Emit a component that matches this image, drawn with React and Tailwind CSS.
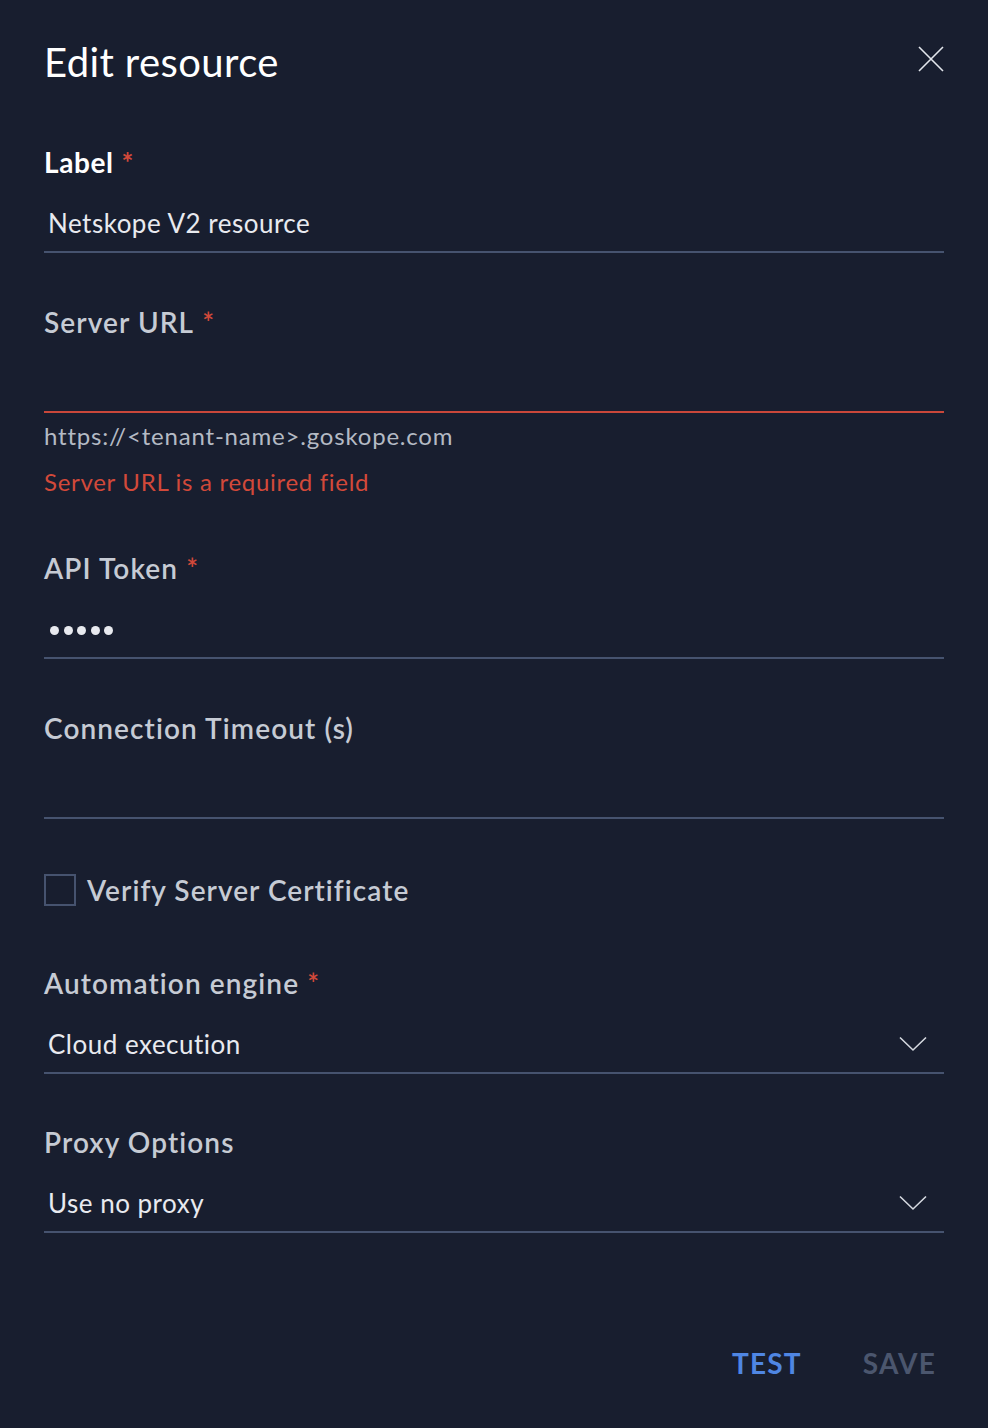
import React from 'react';

const font = { fontFamily: 'Lato, "Open Sans", sans-serif' };

function Req() {
  return <span className="ml-[8px] text-[#d2493a]">*</span>;
}

function Chevron() {
  return (
    <svg className="w-[28px] h-[16px]" viewBox="0 0 28 16" fill="none">
      <path d="M1 1.5 L14 14 L27 1.5" stroke="#d5d9e0" strokeWidth="1.6" />
    </svg>
  );
}

function Field({ label, required, value, dots, error, select, bold }) {
  return (
    <div className="flex flex-col">
      <div
        className={`text-[28px] leading-[32px] ${
          bold ? 'font-bold text-white tracking-[0.6px]' : 'font-semibold text-[#c6cbd4] tracking-[1.1px]'
        }`}
      >
        {label}
        {required && <Req />}
      </div>
      <div
        className={`h-[75px] flex items-end justify-between pl-[4px] pb-[12px] border-b-2 ${
          error ? 'border-[#c9473a]' : 'border-[#46536f]'
        }`}
      >
        {dots ? (
          <div className="flex gap-[4.5px] mb-[10px] pl-[2px]">
            {[0, 1, 2, 3, 4].map((i) => (
              <span key={i} className="w-[9px] h-[9px] rounded-full bg-[#e8eaef]" />
            ))}
          </div>
        ) : (
          <span className="text-[26px] leading-[32px] text-[#e8eaef] tracking-[0.5px]">{value}</span>
        )}
        {select && (
          <span className="mr-[17px] mb-[8px]">
            <Chevron />
          </span>
        )}
      </div>
    </div>
  );
}

export default function App() {
  return (
    <div className="min-h-[1428px] w-[988px] bg-[#181e2f] px-[44px] pt-[38px]" style={font}>
      <div className="flex items-start justify-between">
        <h1 className="text-[40px] leading-[48px] text-white font-normal tracking-[0.4px]">Edit resource</h1>
        <button className="mt-[8px]">
          <svg className="w-[26px] h-[26px]" viewBox="0 0 26 26" fill="none">
            <path d="M1 1 L25 25 M25 1 L1 25" stroke="#e3e6ec" strokeWidth="1.6" />
          </svg>
        </button>
      </div>

      <div className="mt-[60px]">
        <Field label="Label" required bold value="Netskope V2 resource" />
      </div>

      <div className="mt-[53px]">
        <Field label="Server URL" required error value="" />
        <div className="mt-[9px] text-[24px] leading-[28px] text-[#b4bac4] tracking-[0.8px]">
          https://&lt;tenant-name&gt;.goskope.com
        </div>
        <div className="mt-[16px] text-[24px] leading-[32px] text-[#d2493a] tracking-[0.7px]">
          Server URL is a required field
        </div>
      </div>

      <div className="mt-[54px]">
        <Field label="API Token" required dots />
      </div>

      <div className="mt-[53px]">
        <Field label="Connection Timeout (s)" value="" />
      </div>

      <label className="mt-[55px] flex items-center gap-[11px]">
        <span className="w-[32px] h-[32px] border-2 border-[#46536f] shrink-0" />
        <span className="text-[28px] leading-[32px] font-semibold text-[#c6cbd4] tracking-[1.05px]">
          Verify Server Certificate
        </span>
      </label>

      <div className="mt-[61px]">
        <Field label="Automation engine" required select value="Cloud execution" />
      </div>

      <div className="mt-[52px]">
        <Field label="Proxy Options" select value="Use no proxy" />
      </div>

      <div className="mt-[114px] flex justify-end gap-[61px] pr-[8px]">
        <button className="text-[28px] leading-[32px] font-bold text-[#4f86e3] tracking-[1.2px]">TEST</button>
        <button className="text-[28px] leading-[32px] font-bold text-[#4b566e] tracking-[1.2px]">SAVE</button>
      </div>
    </div>
  );
}
